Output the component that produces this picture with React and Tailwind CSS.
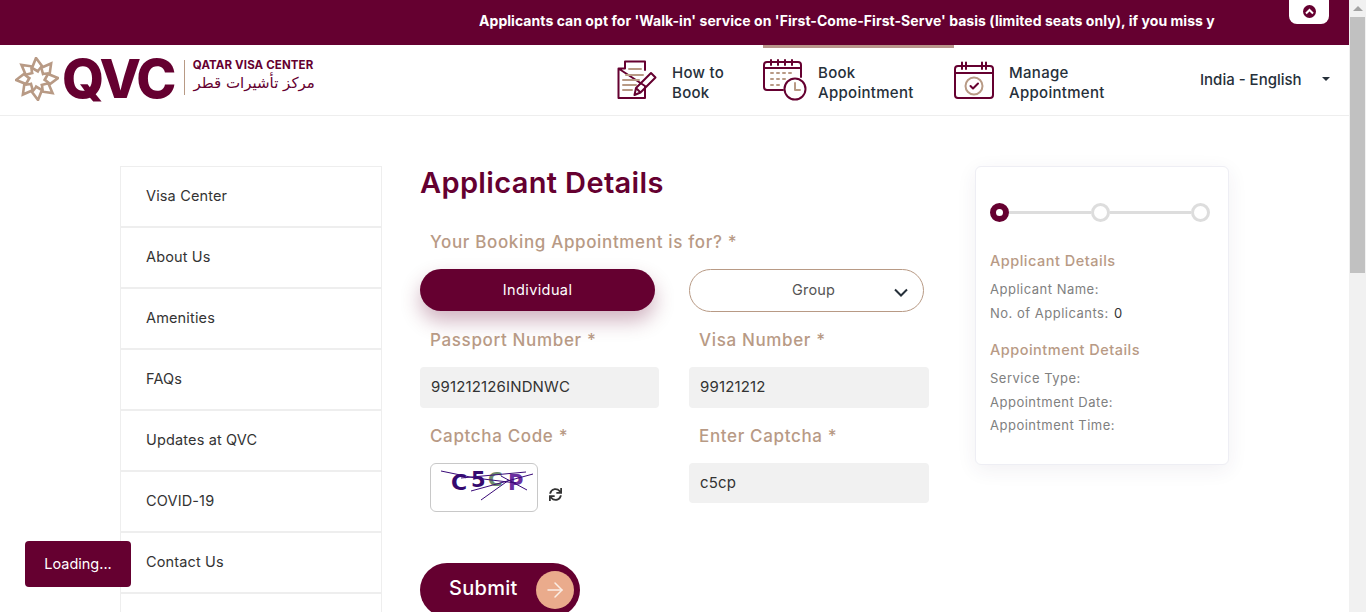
import React from "react";
import { ArrowRight } from "lucide-react";
import { FaSync } from "react-icons/fa";

const F = { fontFamily: "Inter, 'Open Sans', sans-serif" };

function Star() {
  const arms = Array.from({ length: 8 }, (_, i) => i * 45);
  return (
    <svg width="44" height="44" viewBox="0 0 44 44" fill="none" stroke="#b89a85" strokeWidth="2.6" strokeLinejoin="miter">
      {arms.map((a) => (
        <g key={a} transform={`rotate(${a} 22 22)`}>
          <path d="M24 15 L17 11 L21 1 L27 9 L22 15" />
        </g>
      ))}
    </svg>
  );
}

function DocIcon() {
  return (
    <svg width="40" height="40" viewBox="0 0 40 40" fill="none" strokeWidth="2" strokeLinecap="round" strokeLinejoin="round">
      <path d="M8 1.5 H28 V10 M28 26 V38 H1.5 V8.5 Z M8 1.5 V8.5 H1.5" stroke="#650030" />
      <path d="M12 9 H24 M9 15 H26 M6 20 H22 M6 25 H19 M6 30 H15" stroke="#b89a85" />
      <path d="M17.5 35 L19 28 L34 13 L38.5 17.5 L23.5 32.5 Z M19 28 L23.5 32.5" stroke="#650030" />
    </svg>
  );
}

function CalClockIcon() {
  return (
    <svg width="44" height="42" viewBox="0 0 44 42" fill="none" strokeWidth="2" strokeLinecap="round" strokeLinejoin="round">
      <path d="M20 31 H4 Q1 31 1 28 V6 Q1 3 4 3 H35 Q38 3 38 6 V18" stroke="#650030" />
      <path d="M1 9 H38 M8 1 V6 M15 1 V6 M22 1 V6 M29 1 V6" stroke="#650030" />
      <path d="M8 14 H10 M14 14 H16 M20 14 H22 M26 14 H28 M8 20 H10 M14 20 H16 M20 20 H22 M8 26 H10 M14 26 H16" stroke="#b89a85" />
      <circle cx="32" cy="30" r="10.5" stroke="#650030" fill="#fff" />
      <path d="M32 24 V31 H37" stroke="#b89a85" />
    </svg>
  );
}

function CalCheckIcon() {
  return (
    <svg width="40" height="38" viewBox="0 0 40 38" fill="none" strokeWidth="2" strokeLinecap="round" strokeLinejoin="round">
      <rect x="1" y="5" width="38" height="32" rx="3" stroke="#650030" />
      <path d="M1 12 H39 M8 1.5 V8 M12 1.5 V8 M28 1.5 V8 M32 1.5 V8" stroke="#650030" />
      <circle cx="20" cy="25" r="8.5" stroke="#b89a85" />
      <path d="M16.5 25 L19 27.5 L24 22.5" stroke="#650030" />
    </svg>
  );
}

function NavItem({ icon, a, b, active, width, gap }) {
  return (
    <div className={`h-full flex items-center ${active ? "border-t-[3px] border-[#b8958a] pb-[3px]" : ""}`} style={{ width }}>
      <div className={`flex items-center ${gap}`}>
        {icon}
        <div className="text-[15px] leading-[20px] font-medium text-[#26303a] tracking-[0.3px] pt-[6px]">
          <div>{a}</div>
          <div>{b}</div>
        </div>
      </div>
    </div>
  );
}

function Label({ children, className = "" }) {
  return <div className={`text-[17px] leading-[24px] font-medium text-[#b89a85] tracking-[0.65px] ml-[10px] ${className}`}>{children}</div>;
}

function Field({ value, className = "" }) {
  return <div className={`bg-[#f1f1f1] rounded-[4px] flex items-center pl-[11px] text-[15px] text-[#333] tracking-[0.15px] ${className}`}>{value}</div>;
}

function Captcha() {
  const font = "'DejaVu Sans', sans-serif";
  return (
    <svg width="106" height="47" viewBox="0 0 106 47">
      <text x="20" y="26" fontFamily={font} fontWeight="700" fontSize="22" fill="#35096e">C</text>
      <text x="40" y="23" fontFamily={font} fontWeight="700" fontSize="21" fill="#35096e">5</text>
      <text x="57" y="22" fontFamily={font} fontWeight="700" fontSize="20" fill="#6d8a6d">C</text>
      <text x="77" y="26" fontFamily={font} fontWeight="700" fontSize="21" fill="#6a2fa0">P</text>
      <g stroke="#3a0a78" strokeWidth="1" fill="none">
        <path d="M10 7 L44 14 L85 19" />
        <path d="M40 27 L102 10" />
        <path d="M50 36 L78 16" />
        <path d="M70 12 L96 26" />
        <path d="M30 14 L95 8" />
      </g>
    </svg>
  );
}

function Step({ active }) {
  return <div className={`w-[19px] h-[19px] rounded-full shrink-0 bg-white ${active ? "border-[6px] border-[#650030]" : "border-[3px] border-[#dddddd]"}`} />;
}

const menu = ["Visa Center", "About Us", "Amenities", "FAQs", "Updates at QVC", "COVID-19", "Contact Us", ""];
const small = "text-[13px] leading-[20px] text-[#808080] tracking-[0.5px]";
const head = "text-[14.5px] leading-[20px] font-medium text-[#b89a85] tracking-[0.5px]";

export default function App() {
  return (
    <div className="relative h-[612px] w-[1366px] overflow-hidden bg-white flex" style={F}>
      <div className="flex-1 min-w-0 flex flex-col">
        <div className="h-[45px] bg-[#650030] shrink-0 flex relative">
          <div className="ml-[479px] w-[736px] h-full overflow-hidden flex items-center whitespace-nowrap text-white font-bold text-[14px] tracking-[0.05px] pb-[5px]">
            Applicants can opt for 'Walk-in' service on 'First-Come-First-Serve' basis (limited seats only), if you miss y
          </div>
          <div className="absolute left-[1289px] top-0 w-[40px] h-[24px] bg-white rounded-b-[8px] flex items-center justify-center pb-[1px]">
            <div className="w-[13px] h-[13px] rounded-full bg-[#650030] flex items-center justify-center">
              <svg width="9" height="7" viewBox="0 0 9 7" fill="none" stroke="#fff" strokeWidth="2"><path d="M1 5.5 L4.5 2 L8 5.5" /></svg>
            </div>
          </div>
        </div>

        <div className="h-[71px] shrink-0 border-b border-[#eeeeee] flex items-stretch">
          <div className="w-[617px] shrink-0 flex items-start">
            <div className="ml-[15px] mt-[12px]"><Star /></div>
            <div className="ml-[3px] mt-[2px] text-[#650030] text-[54px] leading-[64px] font-extrabold tracking-[-2.5px]">QVC</div>
            <div className="ml-[10px] mt-[15px] w-px h-[35px] bg-[#b89a85]" />
            <div className="ml-[8px] mt-[13px] text-[#650030] w-[122px]">
              <div className="text-[11.5px] leading-[14px] font-bold tracking-[0.12px] whitespace-nowrap">QATAR VISA CENTER</div>
              <div className="text-[15px] leading-[22px] font-medium whitespace-nowrap" style={{ fontFamily: "'DejaVu Sans', sans-serif" }} dir="rtl">مركز تأشيرات قطر</div>
            </div>
          </div>
          <div className="flex items-stretch h-full">
            <NavItem icon={<DocIcon />} a="How to" b="Book" width="146px" gap="gap-[15px]" />
            <NavItem icon={<CalClockIcon />} a="Book" b="Appointment" active width="191px" gap="gap-[11px]" />
            <NavItem icon={<CalCheckIcon />} a="Manage" b="Appointment" width="246px" gap="gap-[15px]" />
          </div>
          <div className="flex items-center text-[15px] font-medium text-[#26303a] pt-[1px]">
            <span>India - English</span>
            <span className="ml-[20px] mb-[3px] w-0 h-0 border-x-[4px] border-x-transparent border-t-[4px] border-t-[#26303a]" />
          </div>
        </div>

        <div className="flex-1 flex items-start pl-[120px] pt-[50px] min-h-0">
          <div className="w-[262px] shrink-0 border border-[#eeeeee] bg-white">
            {menu.map((m, i) => (
              <div key={i} className="h-[61px] pl-[25px] pb-[2px] flex items-center border-b-2 border-[#eeeeee] text-[14.5px] text-[#333] tracking-[0.15px]">{m}</div>
            ))}
          </div>

          <div className="w-[510px] ml-[38px] shrink-0">
            <h1 className="pt-[1px] text-[29px] leading-[32px] font-semibold text-[#650030] tracking-[0.35px]">Applicant Details</h1>
            <Label className="mt-[31px]">Your Booking Appointment is for? *</Label>
            <div className="mt-[15px] grid grid-cols-[239px_240px] gap-x-[30px]">
              <div className="w-[235px] h-[42px] rounded-full bg-[#650030] text-white text-[14.5px] tracking-[0.4px] flex items-center justify-center shadow-[0_10px_20px_rgba(101,0,48,0.3)]">Individual</div>
              <div className="w-[235px] h-[43px] rounded-full border border-[#b89a85] bg-white flex items-center justify-between pl-[102px] pr-[15px] text-[14.5px] text-[#555] tracking-[0.2px]">
                <span className="pb-[1px]">Group</span>
                <svg className="mt-[3px]" width="14" height="9" viewBox="0 0 14 9" fill="none" stroke="#26303a" strokeWidth="2"><path d="M1 1.5 L7 7.5 L13 1.5" /></svg>
              </div>
              <Label className="mt-[16px]">Passport Number *</Label>
              <Label className="mt-[16px]">Visa Number *</Label>
              <Field value="991212126INDNWC" className="mt-[15px] h-[41px]" />
              <Field value="99121212" className="mt-[15px] h-[41px]" />
              <Label className="mt-[16px]">Captcha Code *</Label>
              <Label className="mt-[16px]">Enter Captcha *</Label>
              <div className="mt-[15px] ml-[10px] flex items-end">
                <div className="w-[108px] h-[49px] border border-[#c8c8c8] rounded-[6px] bg-white overflow-hidden"><Captcha /></div>
                <FaSync className="ml-[11px] mb-[11px] text-[#333]" size={13} />
              </div>
              <Field value="c5cp" className="mt-[15px] h-[40px]" />
            </div>
            <div className="mt-[51px] w-[160px] h-[54px] rounded-full bg-[#650030] flex items-center pl-[29px] pr-[6px] justify-between text-white text-[20px] font-medium tracking-[0.3px]">
              <span className="pb-[4px]">Submit</span>
              <span className="w-[38px] h-[38px] rounded-full bg-[#eaab8c] flex items-center justify-center">
                <ArrowRight size={24} strokeWidth={1.5} className="text-[#fbeee6]" />
              </span>
            </div>
          </div>

          <div className="w-[254px] h-[299px] ml-[45px] shrink-0 rounded-[6px] border border-[#eeeef4] bg-white shadow-[0_5px_20px_rgba(60,40,90,0.07)] pl-[14px] pr-[18px] pt-[36px]">
            <div className="flex items-center">
              <Step active />
              <div className="flex-1 h-[3px] bg-[#dddddd]" />
              <Step />
              <div className="flex-1 h-[3px] bg-[#dddddd]" />
              <Step />
            </div>
            <div className={`mt-[29px] ${head}`}>Applicant Details</div>
            <div className={`mt-[8px] ${small}`}>Applicant Name:</div>
            <div className={`mt-[4px] ${small}`}>No. of Applicants: <span className="ml-[1px] text-[#333]">0</span></div>
            <div className={`mt-[17px] ${head}`}>Appointment Details</div>
            <div className={`mt-[8px] ${small}`}>Service Type:</div>
            <div className={`mt-[4px] ${small}`}>Appointment Date:</div>
            <div className={`mt-[3px] ${small}`}>Appointment Time:</div>
          </div>
        </div>
      </div>

      <div className="w-[17px] shrink-0 bg-[#f1f1f1] flex flex-col items-center">
        <div className="h-[17px] flex items-center justify-center">
          <div className="w-0 h-0 border-x-[5px] border-x-transparent border-b-[5px] border-b-[#a3a3a3]" />
        </div>
        <div className="w-[15px] h-[256px] bg-[#c1c1c1]" />
      </div>

      <div className="absolute left-[25px] top-[541px] w-[106px] h-[46px] rounded-[4px] bg-[#650030] text-white text-[14.5px] flex items-center justify-center">Loading...</div>
    </div>
  );
}
